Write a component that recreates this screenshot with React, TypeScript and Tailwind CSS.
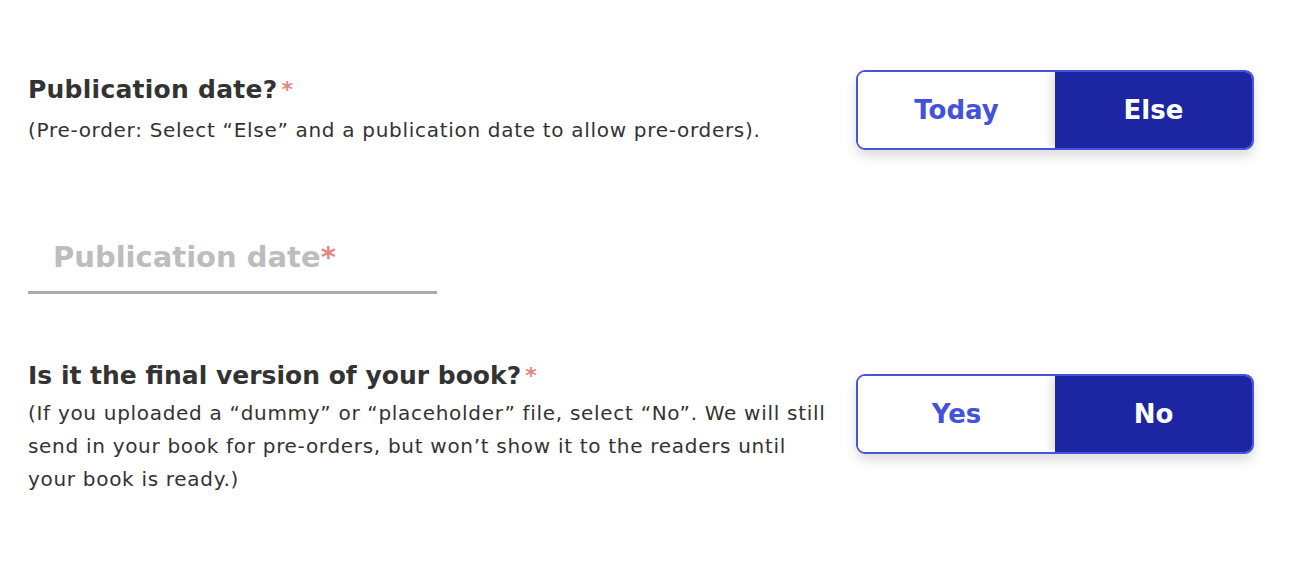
import React, { useState } from "react";

// Segmented yes/no style toggle
function Toggle({ left, right, value, onChange }: { left: string; right: string; value: string; onChange: (v: string) => void }) {
  return (
    <div className="flex h-[80px] w-[398px] shrink-0 overflow-hidden rounded-[9px] border-2 border-[#4354dd] shadow-[0_6px_12px_rgba(0,0,0,0.14)]">
      {[left, right].map((opt) => {
        const active = opt === value;
        return (
          <button
            key={opt}
            onClick={() => onChange(opt)}
            className={
              active
                ? "flex-1 bg-[#1c26a2] text-[26px] font-bold text-white shadow-[-4px_0_8px_rgba(0,0,0,0.12)]"
                : "flex-1 bg-white text-[26px] font-bold text-[#4352db]"
            }
          >
            {opt}
          </button>
        );
      })}
    </div>
  );
}

export default function App() {
  const [pubDate, setPubDate] = useState("Else");
  const [isFinal, setIsFinal] = useState("No");

  return (
    <div className="min-h-[588px] bg-white pl-[28px] pr-[52px] pt-[70px] text-[#333]" style={{ fontFamily: '"DejaVu Sans", sans-serif' }}>
      {/* Publication date question */}
      <div className="flex items-start justify-between">
        <div className="pt-[4px]">
          <h2 className="text-[25px] font-bold leading-[32px] tracking-[0.25px]">
            Publication date?<span className="ml-[4px] align-top text-[22px] text-[#e5877d]">*</span>
          </h2>
          <p className="mt-[9px] text-[20px] leading-[30px] tracking-[0.7px]">
            (Pre-order: Select “Else” and a publication date to allow pre-orders).
          </p>
        </div>
        <Toggle left="Today" right="Else" value={pubDate} onChange={setPubDate} />
      </div>

      {/* Date input */}
      <div className="mt-[87px] w-[409px] border-b-[3px] border-[#aaa] pb-[14px] pl-[25px]">
        <span className="text-[29px] font-bold leading-[40px] text-[#bdbdbd]">
          Publication date<span className="text-[#e5877d]">*</span>
        </span>
      </div>

      {/* Final version question */}
      <div className="mt-[80px] flex items-start justify-between">
        <div className="-mt-[14px] w-[810px]">
          <h2 className="text-[25px] font-bold leading-[32px]">
            Is it the final version of your book?<span className="ml-[4px] align-top text-[22px] text-[#e5877d]">*</span>
          </h2>
          <p className="mt-[5px] text-[20px] leading-[33px] tracking-[0.7px]">
            (If you uploaded a “dummy” or “placeholder” file, select “No”. We will still send in your book for pre-orders, but won’t show it to the readers until your book is ready.)
          </p>
        </div>
        <Toggle left="Yes" right="No" value={isFinal} onChange={setIsFinal} />
      </div>
    </div>
  );
}
